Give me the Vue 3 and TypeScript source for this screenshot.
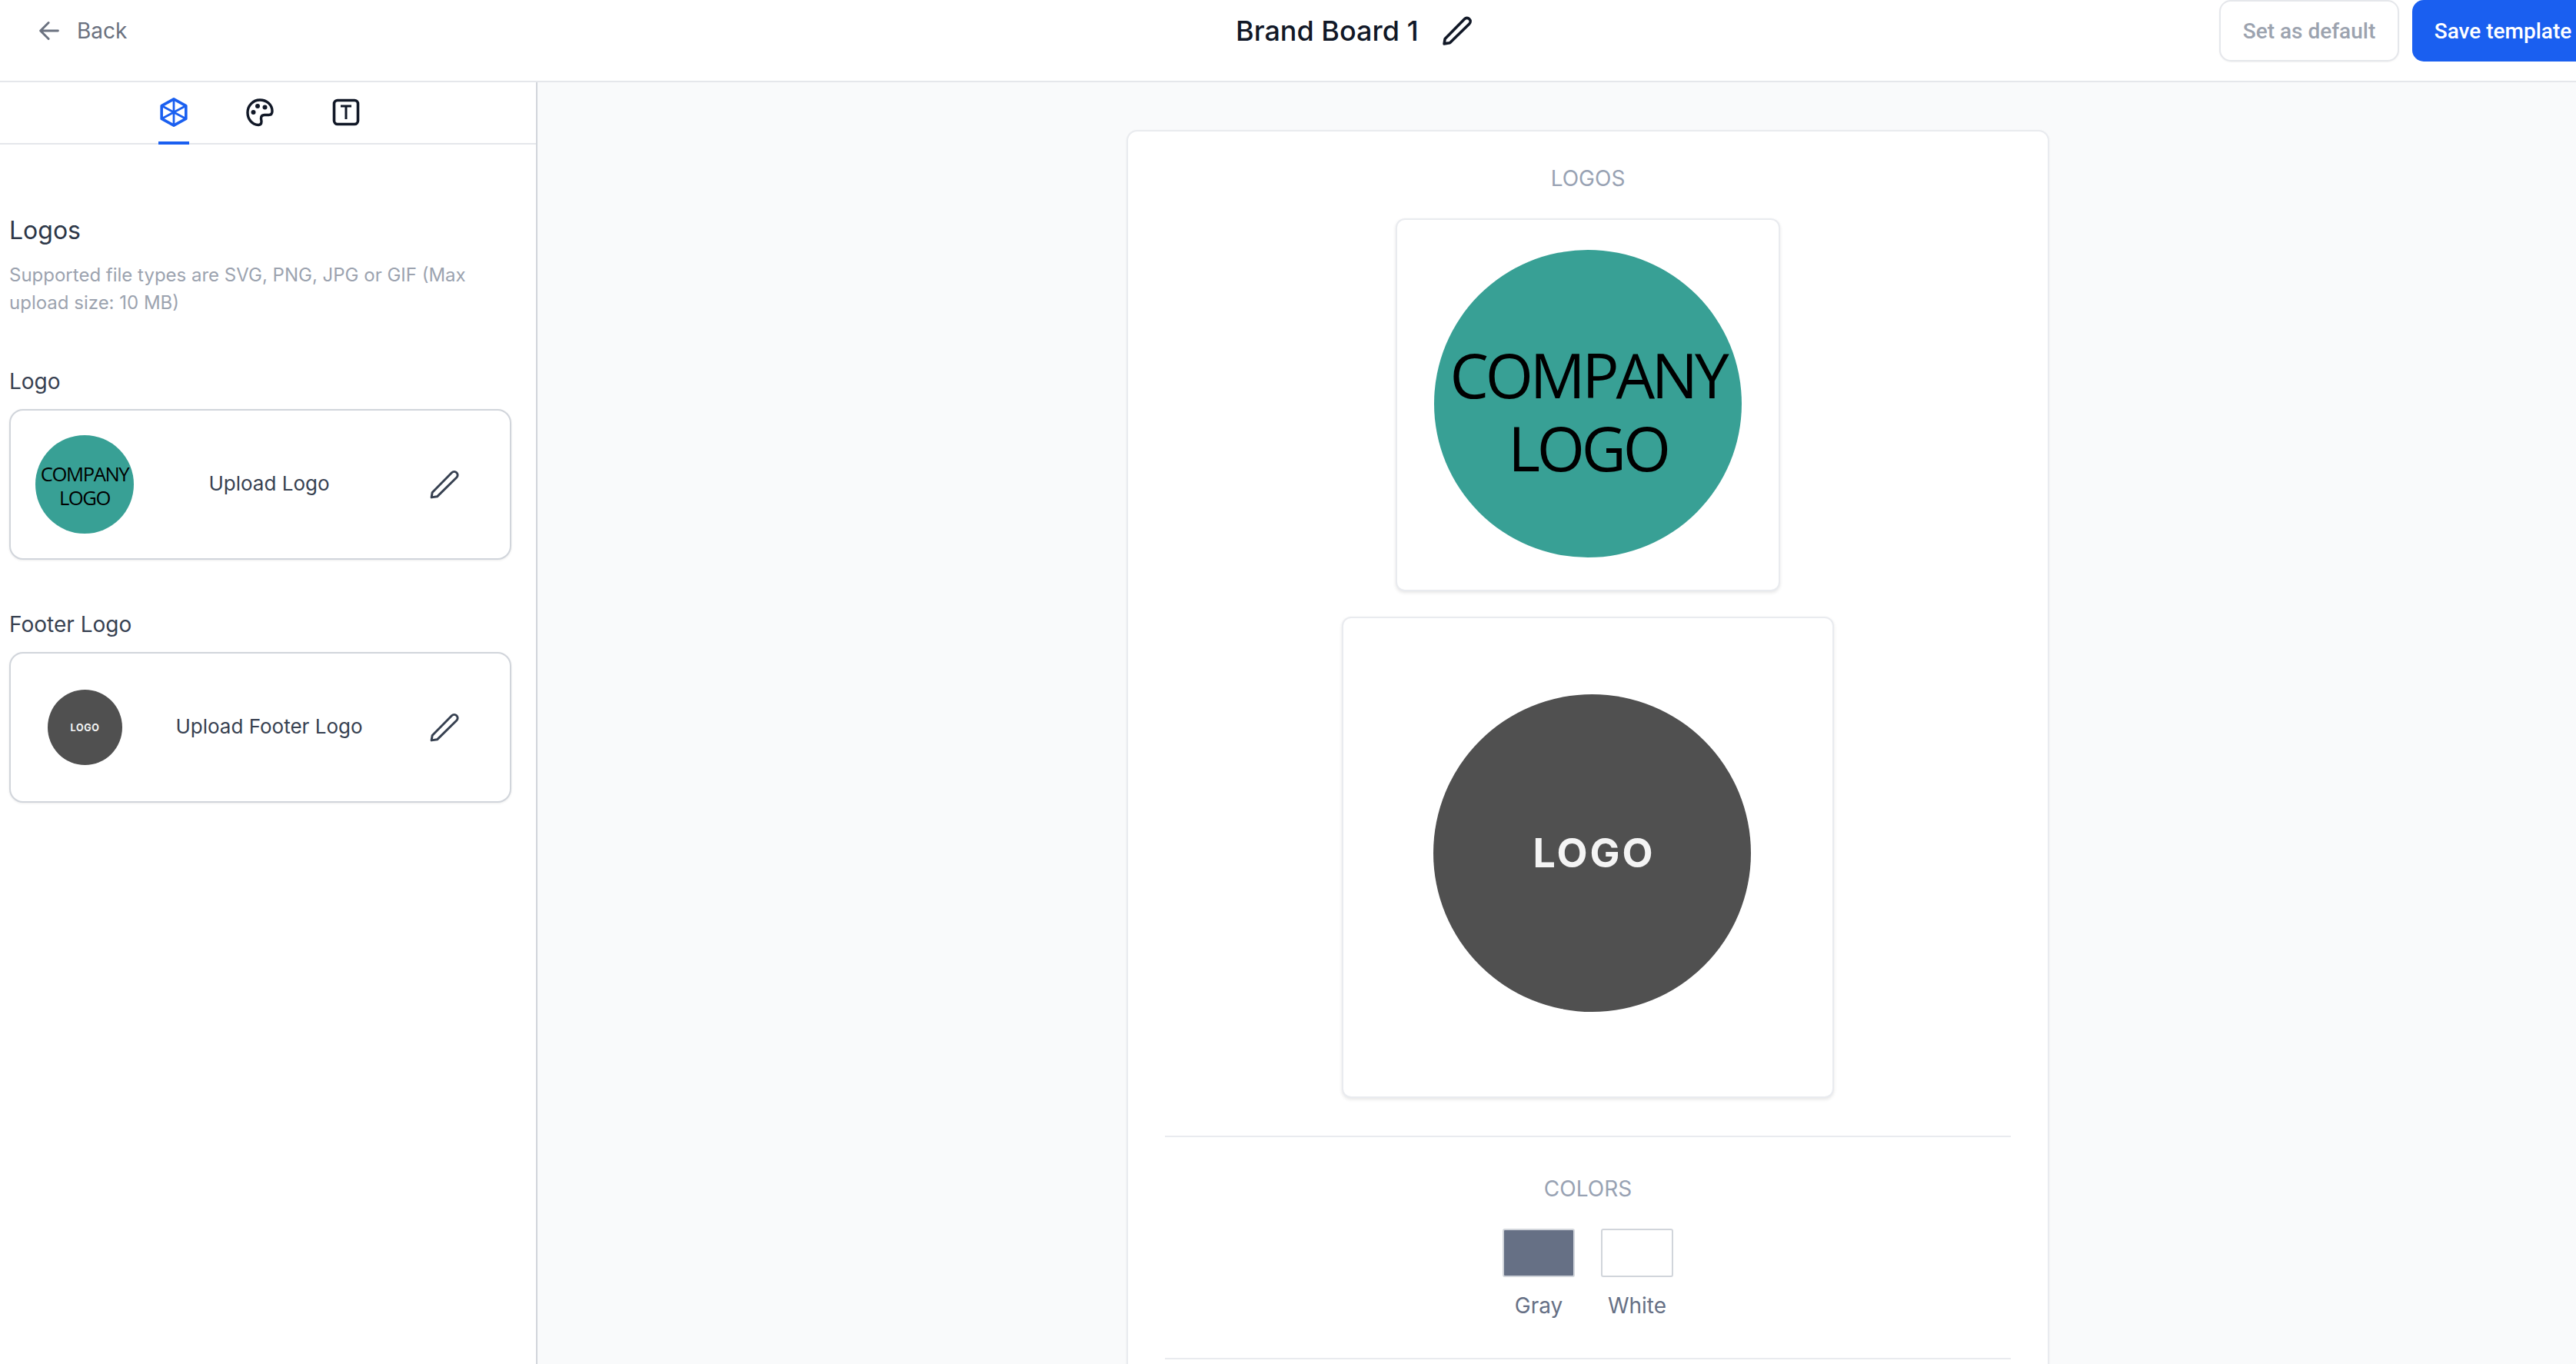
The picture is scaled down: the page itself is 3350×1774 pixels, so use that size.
<script setup lang="ts">
const tabs = ['hex', 'palette', 'text']
</script>

<template>
  <div class="page">
    <header class="topbar">
      <a class="back">
        <svg class="back-icon" viewBox="0 0 32 32" fill="none" stroke="#6b7280" stroke-width="3.400" stroke-linecap="round" stroke-linejoin="round">
          <path d="M29 16H4M15 4 3 16l12 12" />
        </svg>
        <span>Back</span>
      </a>
      <div class="title">
        <span>Brand Board 1</span>
        <svg class="title-pen" viewBox="0 0 36 36" fill="none" stroke="#111827" stroke-width="3.400" stroke-linejoin="round">
          <path d="M2 34l1-6L27 3.500a4.200 4.200 0 0 1 6 6L9 33z" />
        </svg>
      </div>
      <div class="actions">
        <button class="btn ghost">Set as default</button>
        <button class="btn primary">Save template</button>
      </div>
    </header>

    <div class="body">
      <aside class="side">
        <nav class="tabs">
          <div v-for="t in tabs" :key="t" class="tab" :class="{ on: t === 'hex' }">
            <svg v-if="t === 'hex'" viewBox="0 0 34 36" fill="none" stroke="#1a5ff0" stroke-width="3.400" stroke-linejoin="round">
              <path d="M17 1.800 32 10v16l-15 8.200L2 26V10z" />
              <path d="M17 1.800v32.400M2 10l30 16M32 10 2 26" stroke-width="2.600" />
            </svg>
            <svg v-else-if="t === 'palette'" viewBox="0 0 36 36" fill="none" stroke="#111827" stroke-width="3.400">
              <path d="M18 2C9 2 2 9.500 2 18.500 2 27 8 34.500 16 34.500c3 0 4-2 4-4.500 0-1.500-.5-2.500-.5-4 0-3 2-4.500 4.500-4.500h5.500c3 0 4.500-2 4.500-5C34 8 26.500 2 18 2z" />
              <circle cx="9.500" cy="18" r="3" fill="#111827" stroke="none" />
              <circle cx="15" cy="10" r="3" fill="#111827" stroke="none" />
              <circle cx="24.500" cy="11.500" r="3" fill="#111827" stroke="none" />
            </svg>
            <svg v-else viewBox="0 0 36 36" fill="none" stroke="#111827" stroke-width="3.600">
              <rect x="2.500" y="2.500" width="31" height="31" rx="4.500" />
              <path d="M11 10h14M18 10v17" stroke-width="3" />
            </svg>
          </div>
        </nav>

        <section class="panel">
          <h2 class="panel-title">Logos</h2>
          <p class="panel-desc">Supported file types are SVG, PNG, JPG or GIF (Max upload size: 10 MB)</p>

          <label class="field-label first">Logo</label>
          <div class="upload">
            <div class="upload-thumb">
              <div class="logo-teal small"><span>COMPANY</span><span>LOGO</span></div>
            </div>
            <span class="upload-text">Upload Logo</span>
            <svg class="upload-pen" viewBox="0 0 36 36" fill="none" stroke="#374151" stroke-width="2.800" stroke-linejoin="round">
              <path d="M2 34l1-6L27 3.500a4.200 4.200 0 0 1 6 6L9 33z" />
            </svg>
          </div>

          <label class="field-label second">Footer Logo</label>
          <div class="upload">
            <div class="upload-thumb">
              <div class="logo-dark small"><span>LOGO</span></div>
            </div>
            <span class="upload-text">Upload Footer Logo</span>
            <svg class="upload-pen" viewBox="0 0 36 36" fill="none" stroke="#374151" stroke-width="2.800" stroke-linejoin="round">
              <path d="M2 34l1-6L27 3.500a4.200 4.200 0 0 1 6 6L9 33z" />
            </svg>
          </div>
        </section>
      </aside>

      <main class="main">
        <div class="sheet">
          <h3 class="sheet-title">LOGOS</h3>
          <div class="logo-box box-a">
            <div class="logo-teal"><span>COMPANY</span><span>LOGO</span></div>
          </div>
          <div class="logo-box box-b">
            <div class="logo-dark"><span>LOGO</span></div>
          </div>
          <hr class="rule" />
          <h3 class="sheet-title colors">COLORS</h3>
          <div class="swatches">
            <div class="swatch">
              <div class="chip gray"></div>
              <span>Gray</span>
            </div>
            <div class="swatch">
              <div class="chip white"></div>
              <span>White</span>
            </div>
          </div>
          <hr class="rule last" />
        </div>
      </main>
    </div>
  </div>
</template>

<style>
html, body { margin: 0; background: #fff; }
</style>

<style scoped>
.page {
  width: 3350px;
  height: 1774px;
  overflow: hidden;
  font-family: Inter, "Liberation Sans", sans-serif;
  background: #fff;
}
.topbar {
  display: flex;
  align-items: center;
  width: 3373px;
  height: 107px;
  box-sizing: border-box;
  padding-bottom: 25px;
  border-bottom: 2px solid #e5e7eb;
}
.back {
  display: flex;
  align-items: center;
  gap: 22px;
  margin-left: 50px;
  font-size: 28px;
  color: #6b7280;
  width: 1557px;
}
.back-icon { width: 28px; height: 28px; }
.title {
  display: flex;
  align-items: center;
  gap: 31px;
  font-size: 36px;
  font-weight: 500;
  color: #111827;
}
.title-pen { width: 38px; height: 38px; }
.actions {
  display: flex;
  align-items: center;
  gap: 17px;
  margin-left: auto;
}
.btn {
  height: 80px;
  border-radius: 15px;
  box-sizing: border-box;
  font-family: Roboto, Inter, sans-serif;
  font-size: 28px;
  font-weight: 500;
}
.ghost {
  width: 234px;
  background: #fff;
  color: #9ca3af;
  border: 2px solid #e5e7eb;
  box-shadow: 0 1px 2px rgba(0, 0, 0, 0.05);
}
.primary {
  width: 236px;
  background: #1a5ff0;
  color: #fff;
  border: 0;
}
.body {
  display: flex;
  height: 1667px;
}
.side {
  width: 699px;
  flex: none;
  box-sizing: border-box;
  border-right: 2px solid #d1d5db;
  background: #fff;
}
.tabs {
  display: flex;
  justify-content: center;
  gap: 72px;
  height: 81px;
  box-sizing: border-box;
  padding-right: 22px;
  border-bottom: 2px solid #e5e7eb;
}
.tab {
  width: 40px;
  height: 81px;
  box-sizing: border-box;
  padding-top: 20px;
  display: flex;
  justify-content: center;
}
.tab svg { width: 36px; height: 38px; }
.tab.on { border-bottom: 4px solid #1a5ff0; }
.panel { padding: 92px 0 0 12px; }
.panel-title {
  margin: 0;
  font-size: 32px;
  line-height: 40px;
  font-weight: 400;
  color: #2d3748;
}
.panel-desc {
  margin: 20px 0 0;
  width: 640px;
  font-size: 24px;
  line-height: 36px;
  color: #9ca3af;
}
.field-label {
  display: block;
  font-size: 28px;
  line-height: 36px;
  font-weight: 400;
  color: #374151;
}
.field-label.first { margin-top: 66px; }
.field-label.second { margin-top: 66px; }
.upload {
  width: 653px;
  height: 196px;
  margin-top: 18px;
  box-sizing: border-box;
  display: flex;
  align-items: center;
  border: 2px solid #d1d5db;
  border-radius: 18px;
  background: #fff;
  box-shadow: 0 1px 3px rgba(0, 0, 0, 0.08);
}
.upload-thumb {
  width: 192px;
  display: flex;
  justify-content: center;
  flex: none;
}
.upload-text {
  width: 288px;
  padding-bottom: 3px;
  text-align: center;
  font-size: 26px;
  color: #374151;
  flex: none;
}
.upload-pen { width: 38px; height: 38px; margin-left: 65px; }
.logo-teal {
  width: 400px;
  height: 400px;
  box-sizing: border-box;
  padding-top: 18px;
  border-radius: 50%;
  background: #38a095;
  color: #000;
  display: flex;
  flex-direction: column;
  align-items: center;
  justify-content: center;
  font-family: "Open Sans", sans-serif;
  font-size: 80px;
  line-height: 95px;
  letter-spacing: -4.200px;
}
.logo-teal.small {
  width: 128px;
  height: 128px;
  padding-top: 5px;
  font-size: 25.600px;
  line-height: 30.400px;
  letter-spacing: -1.400px;
}
.logo-dark {
  width: 413px;
  height: 413px;
  box-sizing: border-box;
  padding-left: 6px;
  border-radius: 50%;
  background: #505050;
  color: #f4f4f4;
  display: flex;
  align-items: center;
  justify-content: center;
  font-size: 52px;
  font-weight: 700;
  letter-spacing: 3px;
}
.logo-dark.small {
  width: 97px;
  height: 98px;
  padding-left: 1px;
  font-size: 12.500px;
  letter-spacing: 0.600px;
}
.main {
  flex: 1;
  background: #f9fafb;
  padding-top: 62px;
  min-width: 0;
}
.sheet {
  width: 1200px;
  height: 1700px;
  margin-left: 766px;
  box-sizing: border-box;
  padding-top: 44px;
  background: #fff;
  border: 2px solid #e9ebef;
  border-radius: 14px;
  box-shadow: 0 1px 3px rgba(0, 0, 0, 0.05);
  display: flex;
  flex-direction: column;
  align-items: center;
}
.sheet-title {
  margin: 0;
  font-size: 28px;
  line-height: 34px;
  font-weight: 400;
  color: #98a2b3;
}
.sheet-title.colors { margin-top: 50px; }
.logo-box {
  box-sizing: border-box;
  background: #fff;
  border: 2px solid #e9ebef;
  border-radius: 12px;
  box-shadow: 0 2px 4px rgba(0, 0, 0, 0.1);
  display: flex;
  justify-content: center;
}
.box-a { width: 500px; height: 485px; margin-top: 35px; padding-top: 39px; }
.box-b { width: 640px; height: 626px; margin-top: 33px; padding-top: 99px; padding-left: 10px; }
.rule {
  width: 1100px;
  margin: 49px 0 0;
  border: 0;
  border-top: 2px solid #e9ebef;
}
.rule.last { margin-top: 52px; }
.swatches {
  display: flex;
  gap: 34px;
  margin-top: 35px;
}
.swatch {
  display: flex;
  flex-direction: column;
  align-items: center;
  gap: 21px;
  font-size: 28px;
  line-height: 32px;
  color: #667085;
}
.chip {
  width: 94px;
  height: 63px;
  box-sizing: border-box;
  border-radius: 3px;
  border: 2px solid #d1d5db;
}
.chip.gray { background: #667085; }
.chip.white { background: #fff; }
</style>
